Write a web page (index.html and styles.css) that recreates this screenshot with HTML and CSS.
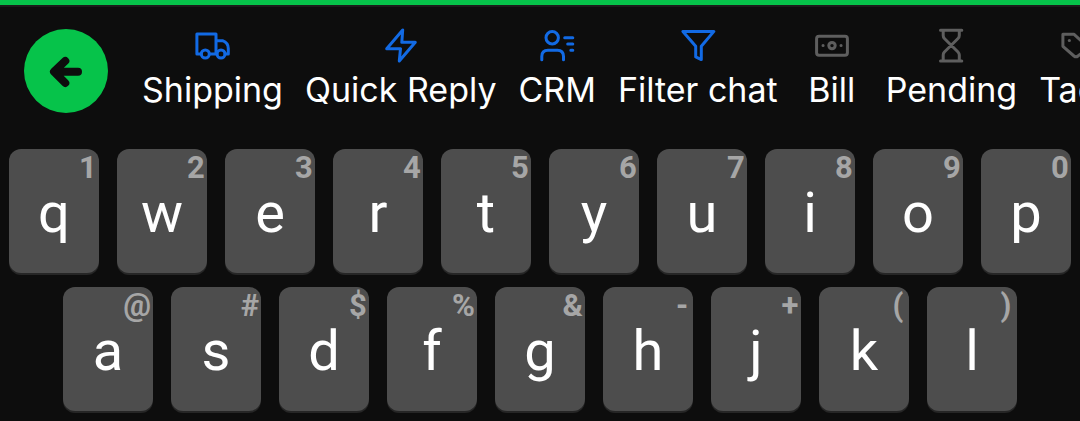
FILE: index.html
```html
<!DOCTYPE html>
<html lang="en">
<head>
<meta charset="utf-8">
<meta name="viewport" content="width=device-width, initial-scale=1">
<title>Keyboard</title>
<link rel="stylesheet" href="styles.css">
</head>
<body>
<main class="keyboard">
  <header class="toolbar">
    <button class="back" type="button" aria-label="Back">
      <svg class="back-icon" viewBox="0 0 84 84" aria-hidden="true"><path d="M54 42.7H32M41.3 31.9L30 42.7L41.3 54"/></svg>
    </button>
    <nav class="tools" aria-label="Tools">
      <button class="tool" type="button">
        <svg class="icon" viewBox="0 0 36 36" aria-hidden="true"><path d="M7.3 27H2.9V7H22V27M15.3 27H23M22 13.7H28.5C32 15 34.3 18 34.3 21.5V27H31"/><circle cx="11.3" cy="27" r="4"/><circle cx="27" cy="27" r="4"/></svg>
        <span>Shipping</span>
      </button>
      <button class="tool" type="button">
        <svg class="icon" viewBox="0 0 36 36" aria-hidden="true"><path d="M19.7 3L18.8 15.3H32.3L16.3 34L17.5 21.7H3.7Z"/></svg>
        <span>Quick Reply</span>
      </button>
      <button class="tool" type="button">
        <svg class="icon" viewBox="0 0 36 36" aria-hidden="true"><circle cx="13.2" cy="10.7" r="6.2"/><path d="M2.8 32.8V29.5Q2.8 23.3 9 23.3H18.3Q24.5 23.3 24.5 29.5V32.8M25.7 10.7H33.8M28.7 16.9H33.8M31.8 23.3H33.8"/></svg>
        <span>CRM</span>
      </button>
      <button class="tool" type="button">
        <svg class="icon" viewBox="0 0 36 36" aria-hidden="true"><path d="M2.9 4.4H33.9L21.3 19.3V32.6L15.7 29.9V19.3Z"/></svg>
        <span>Filter chat</span>
      </button>
      <button class="tool" type="button">
        <svg class="icon muted" viewBox="0 0 36 36" aria-hidden="true"><rect x="2.6" y="9.2" width="30.8" height="19" rx="2.5"/><circle cx="18" cy="18.6" r="3.2"/><path d="M9 18.6h.1M27 18.6h.1"/></svg>
        <span>Bill</span>
      </button>
      <button class="tool" type="button">
        <svg class="icon muted" viewBox="0 0 36 36" aria-hidden="true"><path d="M7.5 3.3H28.8M7.5 34H28.8M10.2 3.3V8.5Q10.2 10.3 11.4 11.5L25 25Q26.3 26.3 26.3 28V34M26.3 3.3V8.5Q26.3 10.3 25 11.5L11.4 25Q10.2 26.3 10.2 28V34"/></svg>
        <span>Pending</span>
      </button>
      <button class="tool" type="button">
        <svg class="icon muted" viewBox="0 0 36 36" aria-hidden="true"><path d="M2.9 7.2H13.8L26.5 18.5Q28.3 20.3 26.5 22.1L18 29Q16 30.6 14 29L2.9 19.3Z"/><path d="M9.3 13.6h.1"/></svg>
        <span>Tags</span>
      </button>
    </nav>
  </header>
  <section class="keys" aria-label="Letters">
    <div class="row">
      <button class="key" type="button">q<span class="hint">1</span></button>
      <button class="key" type="button">w<span class="hint">2</span></button>
      <button class="key" type="button">e<span class="hint">3</span></button>
      <button class="key" type="button">r<span class="hint">4</span></button>
      <button class="key" type="button">t<span class="hint">5</span></button>
      <button class="key" type="button">y<span class="hint">6</span></button>
      <button class="key" type="button">u<span class="hint">7</span></button>
      <button class="key" type="button">i<span class="hint">8</span></button>
      <button class="key" type="button">o<span class="hint">9</span></button>
      <button class="key" type="button">p<span class="hint">0</span></button>
    </div>
    <div class="row row-inset">
      <button class="key" type="button">a<span class="hint">@</span></button>
      <button class="key" type="button">s<span class="hint">#</span></button>
      <button class="key" type="button">d<span class="hint">$</span></button>
      <button class="key" type="button">f<span class="hint">%</span></button>
      <button class="key" type="button">g<span class="hint">&amp;</span></button>
      <button class="key" type="button">h<span class="hint">-</span></button>
      <button class="key" type="button">j<span class="hint">+</span></button>
      <button class="key" type="button">k<span class="hint">(</span></button>
      <button class="key" type="button">l<span class="hint">)</span></button>
    </div>
  </section>
</main>
</body>
</html>
```

FILE: styles.css
```css
* {
  box-sizing: border-box;
}

body {
  margin: 0;
  background: #0d0d0d;
  color: #fff;
}

button {
  margin: 0;
  padding: 0;
  border: 0;
  background: none;
  color: inherit;
  cursor: pointer;
}

.keyboard {
  overflow: hidden;
  border-top: 5px solid #06c34a;
}

.toolbar {
  display: flex;
  align-items: flex-start;
  gap: 34px;
  padding: 20px 0 36px 24px;
  border-top: 2px solid #1b1b1b;
}

.back {
  flex: none;
  width: 84px;
  height: 84px;
  margin-top: 2px;
  border-radius: 50%;
  background: #06c34a;
}

.back-icon {
  display: block;
  fill: none;
  stroke: #0d0d0d;
  stroke-width: 8;
  stroke-linecap: round;
  stroke-linejoin: round;
}

.tools {
  display: flex;
  flex: 1;
  gap: 22px;
  min-width: 0;
}

.tool {
  display: flex;
  flex: none;
  flex-direction: column;
  align-items: center;
  gap: 7px;
  min-width: 64px;
  font: 400 34px/40px Inter, sans-serif;
  white-space: nowrap;
}

.icon {
  width: 36px;
  height: 36px;
  fill: none;
  stroke: #126ae4;
  stroke-width: 3;
  stroke-linecap: round;
  stroke-linejoin: round;
}

.muted {
  stroke: #5e5e5e;
}

.keys {
  display: flex;
  flex-direction: column;
  gap: 14px;
  padding-bottom: 10px;
}

.row {
  display: flex;
  gap: 18px;
  padding: 0 9px;
}

.row-inset {
  padding: 0 calc(5% + 9px);
}

.key {
  position: relative;
  flex: 1;
  min-width: 0;
  height: 124px;
  padding-top: 4px;
  border-radius: 12px;
  background: #4d4d4d;
  box-shadow: 0 2px 0 #262626;
  font: 400 56px/66px Roboto, sans-serif;
}

.hint {
  position: absolute;
  top: 0;
  right: 2px;
  min-width: 18px;
  color: #a6a6a6;
  font-size: 31px;
  font-weight: 700;
  line-height: 38px;
  text-align: center;
}
```
